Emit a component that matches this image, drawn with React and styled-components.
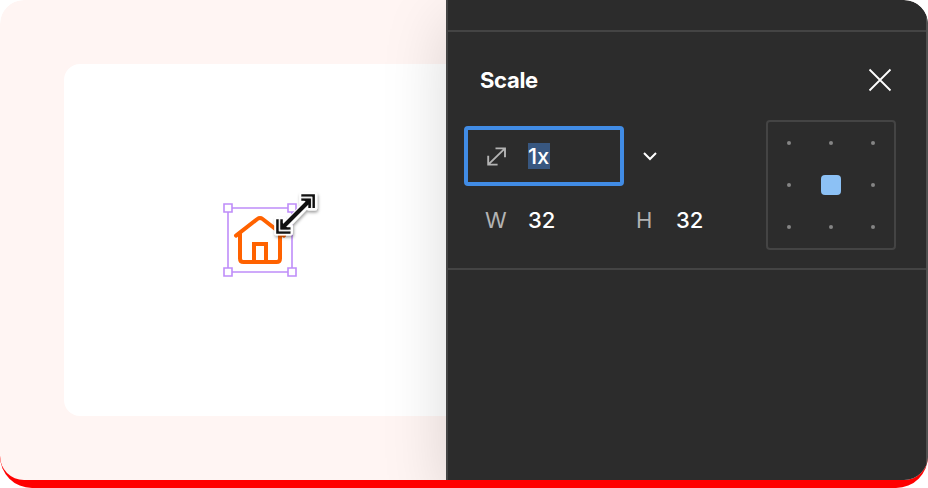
import React from "react";
import styled, { createGlobalStyle } from "styled-components";

const GlobalStyle = createGlobalStyle`
  * { box-sizing: border-box; }
  body { margin: 0; background: #fff; font-family: Inter, "Liberation Sans", sans-serif; }
  svg { display: block; }
`;

const Frame = styled.main`
  width: 928px;
  height: 488px;
  padding-bottom: 8px;
  overflow: hidden;
  border-radius: 24px 24px 32px 32px;
  background: linear-gradient(transparent 240px, #f00 240px);
`;

const Scene = styled.div`
  display: flex;
  height: 480px;
  overflow: hidden;
  border-radius: 24px;
  background: #fff5f3;
`;

const Canvas = styled.section`
  flex: 0 0 446px;
  padding: 64px 0 64px 64px;
`;

const Artboard = styled.div`
  height: 352px;
  padding: 120px 0 0 152px;
  border-radius: 16px 0 0 16px;
  background: #fff;
`;

const Panel = styled.aside`
  flex: 1;
  border-left: 2px solid #444;
  border-right: 2px solid #505050;
  background: #2c2c2c;
  color: #fff;
  box-shadow: 0 20px 60px rgba(0, 0, 0, 0.15);
`;

const PanelTop = styled.div`
  height: 32px;
  border-bottom: 2px solid #444;
`;

const ScaleSection = styled.section`
  height: 238px;
  border-bottom: 2px solid #444;
`;

const Header = styled.header`
  display: flex;
  align-items: center;
  justify-content: space-between;
  height: 88px;
  padding: 8px 34px 0 32px;
`;

const Title = styled.h2`
  margin: 0;
  font-size: 22px;
  line-height: 32px;
  font-weight: 700;
  letter-spacing: -0.3px;
`;

const IconButton = styled.button`
  padding: 0;
  border: 0;
  background: transparent;
  color: #fff;
`;

const Content = styled.div`
  display: flex;
  justify-content: space-between;
  padding: 0 30px 0 16px;
`;

const Fields = styled.div`
  width: 270px;
  padding-top: 6px;
`;

const ScaleRow = styled.div`
  display: flex;
  align-items: center;
`;

const ScaleField = styled.div`
  display: flex;
  align-items: center;
  width: 160px;
  height: 60px;
  padding-left: 18px;
  border: 4px solid #418ce5;
  border-radius: 4px;
`;

const Selection = styled.span`
  width: 22px;
  height: 26px;
  margin-left: 20px;
  background: #385780;
  font-size: 22px;
  font-weight: 500;
  line-height: 26px;
  letter-spacing: -0.1px;
`;

const MenuButton = styled(IconButton)`
  margin-left: 18px;
`;

const Dimensions = styled.div`
  display: flex;
  padding-left: 21px;
  margin-top: 18px;
`;

const Dimension = styled.div`
  display: flex;
  width: ${({ $width }) => $width}px;
  font-size: 22px;
  font-weight: 500;
  line-height: 32px;
`;

const Label = styled.span`
  width: ${({ $width }) => $width}px;
  color: #b3b3b3;
  font-weight: 400;
`;

const AnchorGrid = styled.div`
  display: grid;
  grid-template-columns: repeat(3, 42px);
  grid-template-rows: repeat(3, 42px);
  place-items: center;
  place-content: center;
  width: 130px;
  height: 130px;
  border: 2px solid #444;
  border-radius: 4px;
`;

const Anchor = styled.span`
  width: ${({ $active }) => ($active ? 20 : 4)}px;
  height: ${({ $active }) => ($active ? 20 : 4)}px;
  border-radius: ${({ $active }) => ($active ? 4 : 2)}px;
  background: ${({ $active }) => ($active ? "#8cc1f5" : "#858585")};
`;

const handles = [[228, 208], [292, 208], [228, 272], [292, 272]];

function SelectedHome() {
  return (
    <svg width="112" height="100" viewBox="216 184 112 100" fill="none" aria-label="Selected home icon">
      <defs>
        <filter id="cursorShadow" x="-20%" y="-20%" width="150%" height="150%">
          <feDropShadow dx="0.8" dy="2" stdDeviation="1.6" floodOpacity="0.38" />
        </filter>
      </defs>
      <path d="M228 208H292V272H228Z" stroke="#bf8df9" strokeWidth="1.6" />
      <g stroke="#ff6200" strokeWidth="4" strokeLinecap="round">
        <path d="M236 235.6 257.4 219Q260 217 262.6 219L284 235.6" strokeLinejoin="round" />
        <path d="M240 234V258.5Q240 262 243.5 262H276.5Q280 262 280 258.5V234" />
        <path d="M254 262V244H266V262" strokeLinecap="butt" />
      </g>
      {handles.map(([x, y]) => (
        <path key={`${x}-${y}`} d={`M${x - 4} ${y - 4}h8v8h-8Z`} fill="#fff" stroke="#bf8df9" strokeWidth="1.6" />
      ))}
      <g filter="url(#cursorShadow)">
        <path d="M301.5 194.5H315V208.3H309V204L288 226H290.7V233.2H276.5V219.3H284V225L306 203H301.5Z" fill="#fff" stroke="#fff" strokeWidth="4.6" strokeLinejoin="round" />
      </g>
      <g stroke="#111">
        <path d="M284 226 308 202" strokeWidth="4" />
        <path d="M303 199H311V207Z" fill="#111" stroke="none" />
        <path d="M280.5 221V229.5H289Z" fill="#111" stroke="none" />
        <path d="M301.3 195.5H313.6V208M277.5 219.3V232.5H290.5" strokeWidth="2.6" />
        <path d="M301.3 199.5H309.6V208M281.5 219.3V228.5H290.5" strokeWidth="2.6" />
      </g>
      <path d="M301.3 197.5H311.6V208M279.5 219.3V230.5H290.5" stroke="#eee" strokeWidth="1.3" />
    </svg>
  );
}

export default function App() {
  return (
    <>
      <GlobalStyle />
      <Frame>
        <Scene>
          <Canvas><Artboard><SelectedHome /></Artboard></Canvas>
          <Panel>
            <PanelTop />
            <ScaleSection>
              <Header>
                <Title>Scale</Title>
                <IconButton aria-label="Close">
                  <svg width="24" height="24" viewBox="0 0 24 24" fill="none" stroke="currentColor" strokeWidth="1.8">
                    <path d="M1.5 1.5 22.5 22.5M22.5 1.5 1.5 22.5" />
                  </svg>
                </IconButton>
              </Header>
              <Content>
                <Fields>
                  <ScaleRow>
                    <ScaleField>
                      <svg width="22" height="20" viewBox="0 0 22 20" fill="none" stroke="#b3b3b3" strokeWidth="1.9">
                        <path d="M2.2 18.6 19 2.4M9.5 2.4H19V11.2M2.2 9.8V18.6H11.6" />
                      </svg>
                      <Selection>1x</Selection>
                    </ScaleField>
                    <MenuButton aria-label="Scale options">
                      <svg width="16" height="10" viewBox="0 0 16 10" fill="none" stroke="currentColor" strokeWidth="2">
                        <path d="m2 2 6 6 6-6" />
                      </svg>
                    </MenuButton>
                  </ScaleRow>
                  <Dimensions>
                    <Dimension $width={151}><Label $width={43}>W</Label>32</Dimension>
                    <Dimension $width={80}><Label $width={40}>H</Label>32</Dimension>
                  </Dimensions>
                </Fields>
                <AnchorGrid>
                  {Array.from({ length: 9 }, (_, i) => <Anchor key={i} $active={i === 4} />)}
                </AnchorGrid>
              </Content>
            </ScaleSection>
          </Panel>
        </Scene>
      </Frame>
    </>
  );
}
